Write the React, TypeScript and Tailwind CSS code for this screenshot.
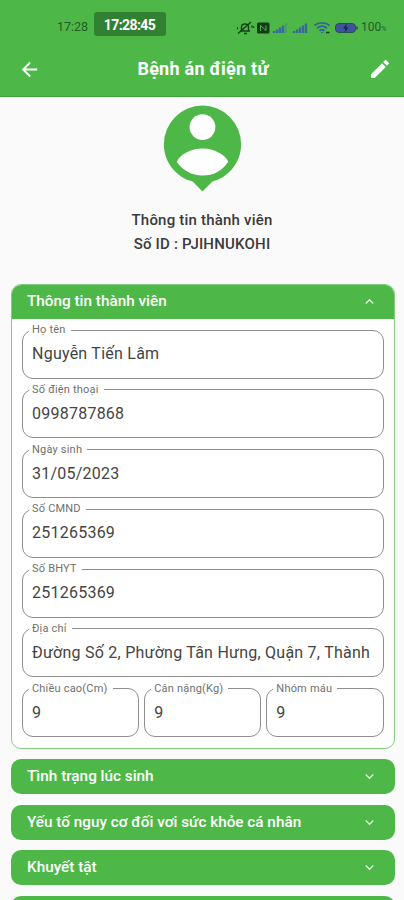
import React from 'react';
import { MdArrowBack, MdEdit, MdExpandLess, MdExpandMore } from 'react-icons/md';

type FieldProps = {
  label: string;
  value: string;
};

const fields: FieldProps[] = [
  { label: 'Họ tên', value: 'Nguyễn Tiến Lâm' },
  { label: 'Số điện thoại', value: '0998787868' },
  { label: 'Ngày sinh', value: '31/05/2023' },
  { label: 'Số CMND', value: '251265369' },
  { label: 'Số BHYT', value: '251265369' },
  { label: 'Địa chỉ', value: 'Đường Số 2, Phường Tân Hưng, Quận 7, Thành' },
];

const measures: FieldProps[] = [
  { label: 'Chiều cao(Cm)', value: '9' },
  { label: 'Cân nặng(Kg)', value: '9' },
  { label: 'Nhóm máu', value: '9' },
];

const sections = [
  'Tình trạng lúc sinh',
  'Yếu tố nguy cơ đối vơi sức khỏe cá nhân',
  'Khuyết tật',
];

function Field({ label, value }: FieldProps): JSX.Element {
  return (
    <fieldset className="h-[54.5px] min-w-0 flex-1 rounded-[11px] border border-[#8f8f8f] pl-[9px]">
      <legend className="-ml-[3px] h-3 whitespace-nowrap pl-[3px] pr-[5px] text-[11px] leading-3 tracking-[0.2px] text-[#707070]">
        {label}
      </legend>
      <div className="mt-[7px] overflow-hidden whitespace-nowrap text-base leading-[21px] tracking-[0.24px] text-[#444]">
        {value}
      </div>
    </fieldset>
  );
}

function StatusIcons(): JSX.Element {
  return (
    <svg className="h-4 w-[124px]" viewBox="0 0 124 16" fill="none">
      {/* muted bell */}
      <path d="M4 11h10M5.5 10.5V7c0-4 7-4 7 0v3.5M8 13.5h3M2 13.5L15 2" stroke="#173f17" strokeWidth="1.4" />
      <path d="M1.5 7v2.5M16 5v3M17.8 6v2" stroke="#173f17" />
      {/* nfc */}
      <rect x="21" y="2.5" width="12.5" height="11" rx="1.5" fill="#123a14" />
      <path d="M24.500 11V5.500l5.500 5V5.500" stroke="#4db848" />
      {/* signal bars */}
      <path d="M38 13v-2M41 13V9.5M44 13V7.5M47 13V5.5" stroke="#38699c" strokeWidth="2.5" />
      <path d="M50 13V3" stroke="#46a067" strokeWidth="2" />
      <path d="M58 13v-2M61 13V9.5M64 13V7.5M67 13V5.5M70 13V3.5" stroke="#38699c" strokeWidth="2.4" />
      {/* wifi */}
      <path d="M78.5 5.5c4-3.5 11-3.5 15 0M81 8.2c3-2.5 7-2.5 10 0M83.5 10.8c1.5-1.200 3.5-1.200 5 0" stroke="#34639d" strokeWidth="1.8" />
      <path d="M84.5 12l1.5 1.5 1.5-1.5z" fill="#34639d" />
      <path d="M90 12.5h3.5" stroke="#173f17" strokeWidth="1.5" />
      {/* battery */}
      <rect x="99.5" y="3.5" width="20" height="9" rx="3.5" fill="#40549d" stroke="#28504c" />
      <path d="M121 6.5v3" stroke="#28504c" strokeWidth="1.5" />
      <path d="M111 3.5l-4 5h2.5l-1 4 4-5H110z" fill="#142742" />
    </svg>
  );
}

export default function App(): JSX.Element {
  return (
    <div className="h-[900px] w-full overflow-hidden bg-[#fafafa] font-['Roboto',sans-serif]">
      <header className="h-[97px] border-b border-[#3da239] bg-[#4db848]">
        <div className="flex h-[42px] items-start pl-[57px] pt-3">
          <span className="mt-[7px] w-[37px] text-[12.5px] leading-4 text-[#245c24]">17:28</span>
          <span className="h-6 w-[72px] rounded-[3px] bg-[#318132] pr-px text-center text-[14px] font-bold leading-[26px] tracking-[-0.6px] text-white">
            17:28:45
          </span>
          <div className="ml-[70px] mt-[7px] flex items-center">
            <StatusIcons />
            <span className="ml-px text-[12px] leading-4 text-[#245c24]">
              100<span className="text-[7px]">%</span>
            </span>
          </div>
        </div>
        <div className="flex h-[54px] items-center justify-between px-[18px]">
          <MdArrowBack className="h-[23px] w-[23px] text-white" />
          <h1 className="-ml-[3px] text-[18px] font-bold leading-6 tracking-[0.25px] text-white">Bệnh án điện tử</h1>
          <MdEdit className="-mr-1.5 h-6 w-6 text-white" />
        </div>
      </header>

      <div className="flex h-[187px] flex-col items-center">
        <svg className="h-[103px] w-[103px] shrink-0" viewBox="0 0 24 24">
          <path
            className="fill-[#4db848]"
            d="M12 2a9 9 0 0 0-9 9c0 4.17 2.84 7.67 6.69 8.69L12 22l2.31-2.31C18.16 18.67 21 15.17 21 11a9 9 0 0 0-9-9z"
          />
          <circle cx="12" cy="7" r="3" className="fill-white" />
          <path className="fill-white" d="M12 18.3c-2.5 0-4.71-1.28-6-3.22C6.8 13.4 9.300 12 12 12s5.200 1.400 6 3.08a7.2 7.2 0 0 1-6 3.22z" />
        </svg>
        <p className="mt-2 text-[15px] font-medium leading-6 tracking-[0.2px] text-[#3a3a3a]">Thông tin thành viên</p>
        <p className="text-[15px] font-medium leading-6 tracking-[0.2px] text-[#3a3a3a]">Số ID : PJIHNUKOHI</p>
      </div>

      <main className="pl-[11px] pr-[9.5px]">
        <section className="h-[465px] overflow-hidden rounded-[10px] border border-[#85cb82] bg-white">
          <div className="-mx-px -mt-px flex h-[35px] items-center justify-between bg-[#4db848] pl-4 pr-[17px] text-white">
            <h2 className="text-[15.3px] font-medium">Thông tin thành viên</h2>
            <MdExpandLess className="h-[17px] w-[17px] opacity-80" />
          </div>
          <div className="flex flex-col gap-[5.3px] px-[10px] pt-[5px]">
            {fields.map((field) => (
              <div key={field.label} className="flex">
                <Field label={field.label} value={field.value} />
              </div>
            ))}
            <div className="flex gap-[5px]">
              {measures.map((field) => (
                <Field key={field.label} label={field.label} value={field.value} />
              ))}
            </div>
          </div>
        </section>

        <div className="mt-[10.4px] flex flex-col gap-[10.4px]">
          {sections.map((title) => (
            <section
              key={title}
              className="flex h-[35px] shrink-0 items-center justify-between rounded-[10px] bg-[#4db848] pl-4 pr-[17px] text-white"
            >
              <h2 className="text-[15.3px] font-medium">{title}</h2>
              <MdExpandMore className="h-[17px] w-[17px] opacity-80" />
            </section>
          ))}
          <section className="h-[35px] shrink-0 rounded-[10px] bg-[#4db848]" />
        </div>
      </main>
    </div>
  );
}
